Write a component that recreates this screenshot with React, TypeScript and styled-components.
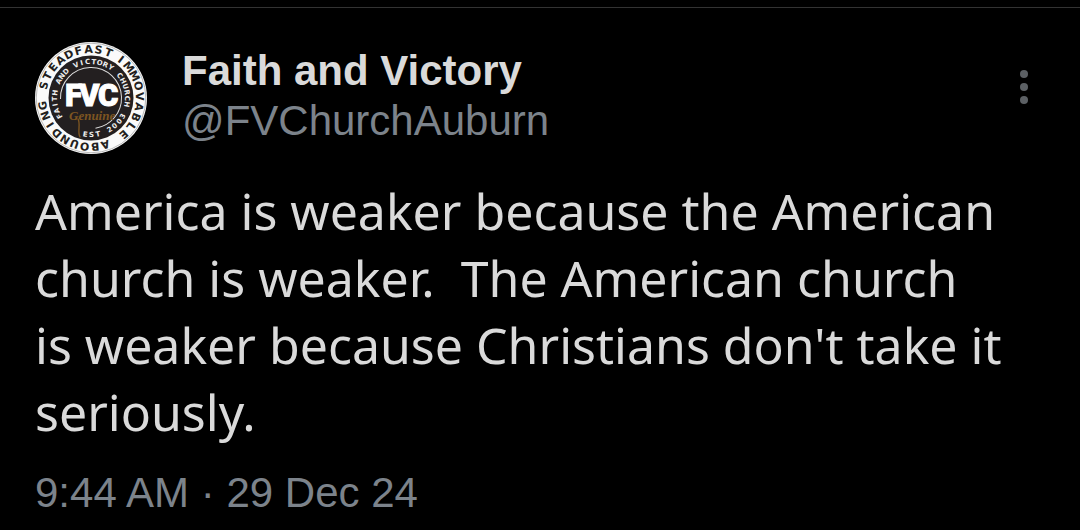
import React from "react";
import styled, { createGlobalStyle } from "styled-components";

const GlobalStyle = createGlobalStyle`
  * { box-sizing: border-box; }
  body {
    margin: 0;
    background: #000;
    color: #dadada;
    font-family: "Liberation Sans", Arial, sans-serif;
  }
`;

const Page = styled.main`
  padding-top: 7px;
`;

const Post = styled.article`
  border-top: 1px solid #333;
  padding: 33px 44px 0 35px;
`;

const Header = styled.header`
  display: flex;
  align-items: flex-start;
  gap: 35px;
`;

const AvatarLink = styled.a`
  display: block;
  flex: none;
  width: 112px;
  height: 114px;
`;

const Author = styled.div`
  flex: 1;
  min-width: 0;
  padding-top: 5px;
  font-size: 42px;
  line-height: 50px;
`;

const Name = styled.div`
  font-weight: 700;
`;

const Handle = styled.a`
  display: block;
  color: #7c838b;
  text-decoration: none;
`;

const MenuButton = styled.button`
  flex: none;
  width: 24px;
  height: 48px;
  margin-top: 22px;
  padding: 0;
  border: 0;
  background: none;
  color: #5c6064;
`;

const Body = styled.p`
  margin: 23px 0 0;
  font-family: "Noto Sans", sans-serif;
  font-size: 50px;
  line-height: 67px;
  white-space: pre-wrap;
`;

const Stamp = styled.time`
  display: block;
  margin-top: 22px;
  color: #7c838b;
  font-size: 42px;
  line-height: 50px;
`;

type ArcProps = {
  text: string;
  from: number;
  to: number;
  radius: number;
  size: number;
  fill: string;
  inward?: boolean;
};

/* Spreads the letters evenly between two clock angles (0 is the top). */
function Arc({ text, from, to, radius, size, fill, inward }: ArcProps) {
  const step = (to - from) / (text.length - 1);
  return (
    <g fill={fill} fontFamily="'DejaVu Sans', sans-serif" fontSize={size} fontWeight={700} textAnchor="middle">
      {text.split("").map((ch, i) => {
        const angle = from + step * i;
        return ch === " " ? null : (
          <text key={i} y={inward ? radius : -radius} transform={`rotate(${inward ? angle - 180 : angle})`}>
            {ch}
          </text>
        );
      })}
    </g>
  );
}

function Logo() {
  return (
    <svg width="112" height="114" viewBox="-56 -57 112 114" role="img" aria-label="Faith and Victory Church logo">
      <circle r="56" fill="#fafafa" />
      <circle r="54.8" fill="none" stroke="#777" strokeWidth="0.5" />
      <circle r="42.5" fill="#231f20" />
      <circle r="30.5" fill="none" stroke="#ddd" strokeWidth="1" strokeDasharray="140 52" transform="rotate(-182)" />
      <Arc text="STEADFAST" from={-75} to={21} radius={45} size={11} fill="#231f20" />
      <Arc text="IMMOVABLE" from={38} to={138} radius={45} size={11} fill="#231f20" />
      <Arc text="ABOUNDING" from={163} to={261} radius={45} size={11} fill="#231f20" />
      <Arc text="FAITH AND VICTORY CHURCH" from={-120} to={100} radius={34} size={7} fill="#eee" />
      <Arc text="EST 2003" from={189} to={120} radius={39} size={7} fill="#eee" inward />
      <text x="-26 -12 7" y="8" fill="#fff" stroke="#fff" strokeWidth="1" fontFamily="Roboto, sans-serif" fontSize="31" fontWeight="900">
        FVC
      </text>
      <path d="M-13 21C-10 26-14 34-11 39" fill="none" stroke="#7d5521" strokeWidth="1.4" strokeLinecap="round" />
      <text x="-22" y="22" fill="#7d5521" fontFamily="'Liberation Serif', serif" fontStyle="italic" fontWeight="700" fontSize="13">
        Genuine
      </text>
    </svg>
  );
}

const message =
  "America is weaker because the American\n" +
  "church is weaker.  The American church\n" +
  "is weaker because Christians don't take it\n" +
  "seriously.";

export default function App() {
  return (
    <Page>
      <GlobalStyle />
      <Post>
        <Header>
          <AvatarLink href="#profile">
            <Logo />
          </AvatarLink>
          <Author>
            <Name>Faith and Victory</Name>
            <Handle href="#profile">@FVChurchAuburn</Handle>
          </Author>
          <MenuButton type="button" aria-label="More options">
            <svg width="24" height="48" viewBox="0 0 24 48" fill="currentColor">
              <circle cx="12" cy="11" r="4" />
              <circle cx="12" cy="24" r="4" />
              <circle cx="12" cy="37" r="4" />
            </svg>
          </MenuButton>
        </Header>
        <Body>{message}</Body>
        <Stamp dateTime="2024-12-29T09:44">9:44 AM · 29 Dec 24</Stamp>
      </Post>
    </Page>
  );
}
